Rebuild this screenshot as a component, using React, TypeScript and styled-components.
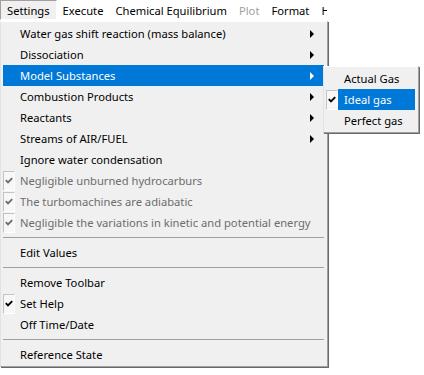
import { FC } from "react";
import styled, { createGlobalStyle } from "styled-components";

const Global = createGlobalStyle`
  body {
    margin: 0;
    background: #fff;
    font-family: "Segoe UI", "Noto Sans", "DejaVu Sans", sans-serif;
    font-size: 11.2px;
    color: #000;
  }
`;

const Screen = styled.div`
  position: relative;
  width: 424px;
  height: 375px;
  overflow: hidden;
  background: #fff;
`;

const Bar = styled.div`
  display: flex;
  width: 327px;
  height: 21px;
  background: #fff;
  overflow: hidden;
  white-space: nowrap;
`;

const BarItem = styled.div<{ $open?: boolean; $off?: boolean }>`
  display: flex;
  align-items: center;
  flex-shrink: 0;
  height: 20px;
  padding: 0 ${(p) => (p.$open ? "6px" : "5px")};
  box-sizing: border-box;
  color: ${(p) => (p.$off ? "#a0a0a0" : "#000")};
  background: ${(p) => (p.$open ? "#f0f0f0" : "transparent")};
  border: 1px solid ${(p) => (p.$open ? "#a0a0a0" : "transparent")};
  border-right-color: ${(p) => (p.$open ? "#fff" : "transparent")};
  border-bottom-color: ${(p) => (p.$open ? "#fff" : "transparent")};
`;

const Drop = styled.div`
  width: 328px;
  box-sizing: border-box;
  background: #f0f0f0;
  border: 1px solid #f0f0f0;
  border-top-color: #fff;
  border-left-color: #e3e3e3;
  border-right: 1px solid #a0a0a0;
  border-bottom: 1px solid #a0a0a0;
  box-shadow: 1px 1px 0 #696969;
  padding: 1px 3px 1px 2px;
`;

const Row = styled.div<{ $hot?: boolean; $off?: boolean }>`
  display: grid;
  grid-template-columns: 17px 1fr 14px;
  align-items: center;
  height: 21px;
  white-space: nowrap;
  color: ${(p) => (p.$hot ? "#fff" : p.$off ? "#6d6d6d" : "#000")};
  background: ${(p) => (p.$hot ? "#0078d7" : "transparent")};
`;

const CheckBox = styled.div<{ $on?: boolean }>`
  display: flex;
  align-items: center;
  justify-content: center;
  width: 12px;
  height: 20px;
  box-sizing: border-box;
  visibility: ${(p) => (p.$on ? "visible" : "hidden")};
  background: #f7f7f7;
  border: 1px solid #c4c4c4;
  border-right-color: #fff;
  border-bottom-color: #fff;
`;

const Arrow = styled.div<{ $hot?: boolean }>`
  width: 0;
  height: 0;
  border-top: 4px solid transparent;
  border-bottom: 4px solid transparent;
  border-left: 4px solid ${(p) => (p.$hot ? "#fff" : "#000")};
`;

const Sep = styled.div`
  height: 9px;
  display: flex;
  align-items: center;
  &::after {
    content: "";
    flex: 1;
    height: 1px;
    background: #a0a0a0;
  }
`;

const Sub = styled.div`
  position: absolute;
  left: 323px;
  top: 66px;
  width: 96px;
  box-sizing: border-box;
  background: #f0f0f0;
  border: 1px solid #f0f0f0;
  border-top-color: #fff;
  border-left-color: #e3e3e3;
  border-right: 1px solid #a0a0a0;
  border-bottom: 1px solid #a0a0a0;
  box-shadow: 1px 1px 0 #696969;
  padding: 1px 3px 1px 2px;
`;

const SubRow = styled.div<{ $hot?: boolean }>`
  display: grid;
  grid-template-columns: 12px 1fr;
  align-items: center;
  height: 21px;
  white-space: nowrap;
  color: ${(p) => (p.$hot ? "#fff" : "#000")};
`;

const SubText = styled.div<{ $hot?: boolean }>`
  height: 21px;
  display: flex;
  align-items: center;
  padding-left: 6px;
  background: ${(p) => (p.$hot ? "#0078d7" : "transparent")};
`;

const Check: FC<{ color?: string }> = ({ color = "#000" }) => (
  <svg width="8" height="7" viewBox="0 0 8 7">
    <polyline points="0.8,3.2 3,5.4 7.2,1.2" fill="none" stroke={color} strokeWidth="1.9" />
  </svg>
);

type Item = { label: string; arrow?: boolean; check?: boolean; off?: boolean; hot?: boolean } | "sep";

const items: Item[] = [
  { label: "Water gas shift reaction (mass balance)", arrow: true },
  { label: "Dissociation", arrow: true },
  { label: "Model Substances", arrow: true, hot: true },
  { label: "Combustion Products", arrow: true },
  { label: "Reactants", arrow: true },
  { label: "Streams of AIR/FUEL", arrow: true },
  { label: "Ignore water condensation" },
  { label: "Negligible unburned hydrocarburs", check: true, off: true },
  { label: "The turbomachines are adiabatic", check: true, off: true },
  { label: "Negligible the variations in kinetic and potential energy", check: true, off: true },
  "sep",
  { label: "Edit Values" },
  "sep",
  { label: "Remove Toolbar" },
  { label: "Set Help", check: true },
  { label: "Off Time/Date" },
  "sep",
  { label: "Reference State" },
];

const gases = [
  { label: "Actual Gas" },
  { label: "Ideal gas", check: true, hot: true },
  { label: "Perfect gas" },
];

const App: FC = () => {
  return (
    <Screen>
      <Global />
      <Bar>
        <BarItem $open>Settings</BarItem>
        <BarItem>Execute</BarItem>
        <BarItem>Chemical Equilibrium</BarItem>
        <BarItem $off>Plot</BarItem>
        <BarItem>Format</BarItem>
        <BarItem>Help</BarItem>
      </Bar>
      <Drop>
        {items.map((it, i) =>
          it === "sep" ? (
            <Sep key={i} />
          ) : (
            <Row key={i} $hot={it.hot} $off={it.off}>
              <CheckBox $on={it.check}>
                <Check color={it.off ? "#6d6d6d" : "#000"} />
              </CheckBox>
              <span>{it.label}</span>
              {it.arrow ? <Arrow $hot={it.hot} /> : <span />}
            </Row>
          )
        )}
      </Drop>
      <Sub>
        {gases.map((g) => (
          <SubRow key={g.label} $hot={g.hot}>
            <CheckBox $on={g.check}>
              <Check />
            </CheckBox>
            <SubText $hot={g.hot}>{g.label}</SubText>
          </SubRow>
        ))}
      </Sub>
    </Screen>
  );
};

export default App;
